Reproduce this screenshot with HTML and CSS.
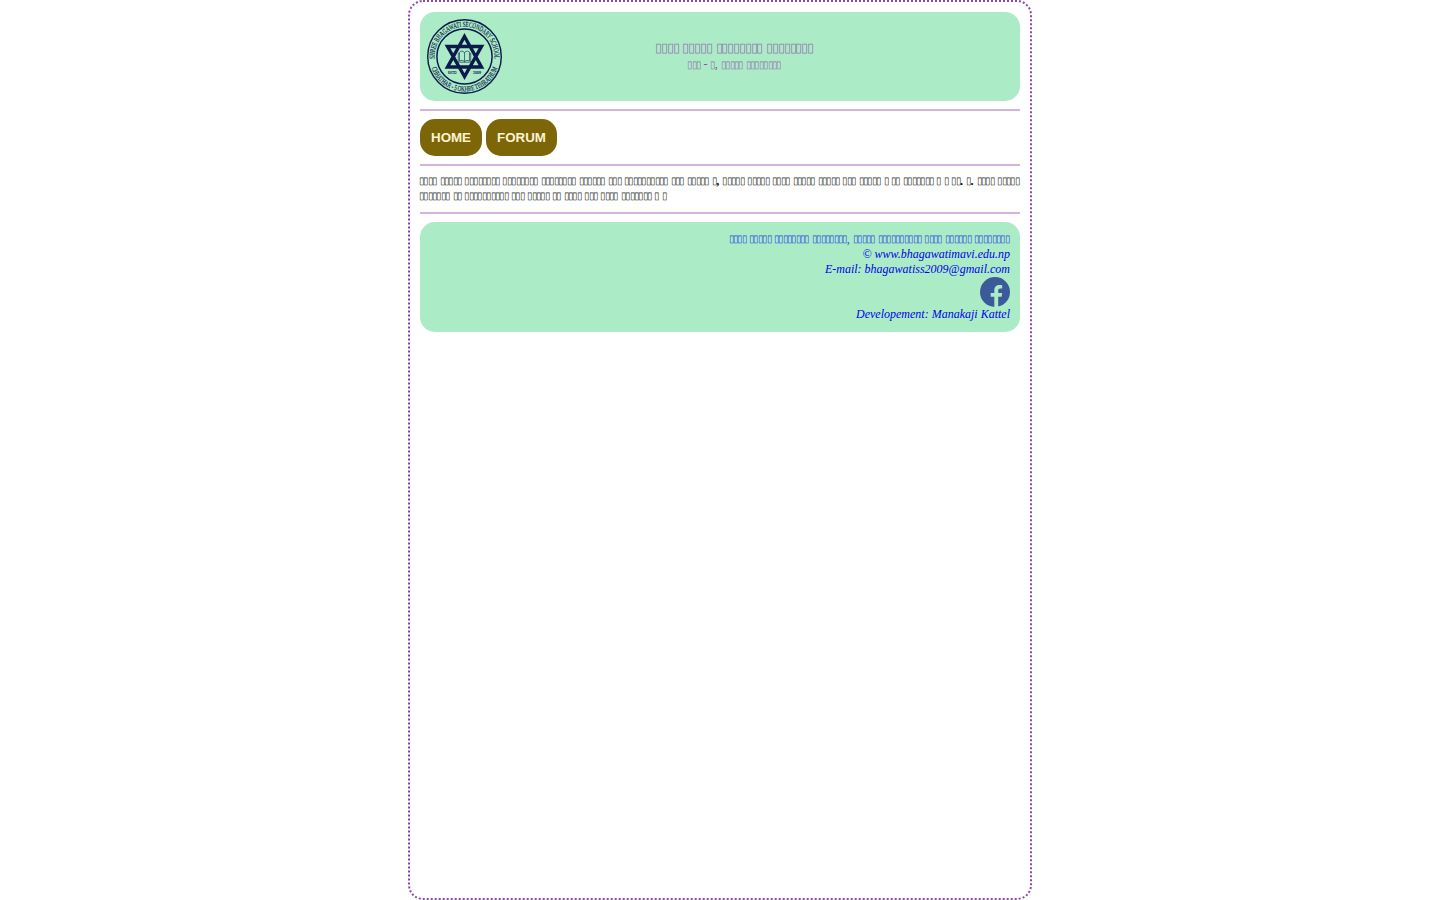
FILE: index.html
```html
<!DOCTYPE html>
<html lang="ne">
<head>
<meta charset="utf-8">
<title>Shree Bhagawati Secondary School</title>
<link rel="stylesheet" href="styles.css">
</head>
<body>
<div class="page">
  <header class="banner">
    <svg class="logo" viewBox="0 0 75 75">
      <defs>
        <path id="arc-top" d="M7.8 42 A30 30 0 1 1 67.2 42"/>
        <path id="arc-bottom" d="M2.6 40 A35 35 0 0 0 72.4 40"/>
      </defs>
      <g fill="none" stroke="#0b1a4a">
        <circle cx="37.5" cy="37.5" r="36.8" stroke-width="1.4"/>
        <circle cx="37.5" cy="37.5" r="27.6" stroke-width="1.5"/>
        <path d="M37.5 17.5 L54.5 48 H20.5 Z M37.5 57.5 L20.5 27.5 H54.5 Z" stroke-width="3.4"/>
        <path d="M37.5 33.5 C35.5 31.6 33 31.8 32.5 33.5 V42 C34.5 41 36.5 41.5 37.5 42.6 C38.5 41.5 40.5 41 42.5 42 V33.5 C42 31.8 39.5 31.6 37.5 33.5 V42.6 M32.3 34.3 H31.3 V43.2 H43.7 V34.3 H42.7" stroke-width=".6"/>
      </g>
      <g class="logo-text">
        <text font-size="7.5" text-anchor="middle"><textPath href="#arc-top" startOffset="50%" textLength="98" lengthAdjust="spacingAndGlyphs">SHREE BHAGAWATI SECONDARY SCHOOL</textPath></text>
        <text font-size="7.5" text-anchor="middle"><textPath href="#arc-bottom" startOffset="50%" textLength="86" lengthAdjust="spacingAndGlyphs">CHHATHAR - 5 OKHRE TEHRATHUM</textPath></text>
        <text x="21" y="55" font-size="5" textLength="8.5" lengthAdjust="spacingAndGlyphs">ESTD</text>
        <text x="46" y="55" font-size="5" textLength="8" lengthAdjust="spacingAndGlyphs">2009</text>
      </g>
    </svg>
    <div class="heading">
      <div class="school">▯▯▯▯ ▯▯▯▯▯ ▯▯▯▯▯▯▯▯ ▯▯▯▯▯▯▯▯</div>
      <div class="address boxes">▯▯▯ <span class="mark">-</span> ▯<span class="mark">,</span> ▯▯▯▯▯ ▯▯▯▯▯▯▯▯</div>
    </div>
  </header>
  <hr class="rule">
  <nav class="menu">
    <button class="menu-button">HOME</button>
    <button class="menu-button">FORUM</button>
  </nav>
  <hr class="rule">
  <div class="intro">
    <div class="boxes full-line">▯▯▯▯ ▯▯▯▯▯ ▯▯▯▯▯▯▯▯ ▯▯▯▯▯▯▯▯ ▯▯▯▯▯▯▯▯ ▯▯▯▯▯▯ ▯▯▯ ▯▯▯▯▯▯▯▯▯▯ ▯▯▯ ▯▯▯▯▯ ▯<span class="mark">,</span> ▯▯▯▯▯ ▯▯▯▯▯ ▯▯▯▯ ▯▯▯▯▯ ▯▯▯▯▯ ▯▯▯ ▯▯▯▯▯ ▯ ▯▯ ▯▯▯▯▯▯▯ ▯ ▯ ▯▯<span class="mark">.</span> ▯<span class="mark">.</span> ▯▯▯▯ ▯▯▯▯▯</div>
    <div class="boxes">▯▯▯▯▯▯▯ ▯▯ ▯▯▯▯▯▯▯▯▯▯ ▯▯▯ ▯▯▯▯▯ ▯▯ ▯▯▯▯ ▯▯▯ ▯▯▯▯ ▯▯▯▯▯▯▯ ▯ ▯</div>
  </div>
  <hr class="rule">
  <footer class="footer">
    <div class="boxes">▯▯▯▯ ▯▯▯▯▯ ▯▯▯▯▯▯▯▯ ▯▯▯▯▯▯▯▯<span class="mark">,</span> ▯▯▯▯▯ ▯▯▯▯▯▯▯▯▯▯ ▯▯▯▯ ▯▯▯▯▯▯ ▯▯▯▯▯▯▯▯</div>
    <div>© www.bhagawatimavi.edu.np</div>
    <div>E-mail: bhagawatiss2009@gmail.com</div>
    <svg class="facebook" viewBox="0 0 30 30">
      <circle cx="15" cy="15" r="15" fill="#3b5a9a"/>
      <path d="M14.3 30 V19.7 H10.7 V16 H14.3 V13.2 C14.3 9.5 16.5 7.9 19.4 7.9 C20.6 7.9 21.7 8 22.2 8.2 V11.4 H20.4 C18.7 11.4 18.2 12.3 18.2 13.5 V16 H22.2 L21.6 19.7 H18.2 V30 Z" fill="#abebc6"/>
    </svg>
    <div>Developement: Manakaji Kattel</div>
  </footer>
</div>
</body>
</html>
```
FILE: styles.css
```css
body {
  margin: 0;
  background: #fff;
  font-family: "Liberation Serif", serif;
  font-size: 12px;
  line-height: 15px;
}
.page {
  box-sizing: border-box;
  width: 624px;
  height: 900px;
  margin: 0 auto;
  padding: 10px;
  border: 2px dotted #8e44ad;
  border-radius: 15px;
}
.banner {
  box-sizing: border-box;
  display: flex;
  height: 89px;
  padding: 7px;
  background: #abebc6;
  border-radius: 15px;
}
.logo {
  flex: none;
  width: 75px;
  height: 75px;
  overflow: visible;
}
.logo-text {
  fill: #0b1a4a;
  stroke: #0b1a4a;
  stroke-width: 0.15px;
  font-family: "Liberation Serif", serif;
}
.heading {
  flex: 1;
  padding-top: 20px;
  margin-left: -54px;
  margin-right: -7px;
  color: #8e44ad;
  text-align: center;
}
.school {
  color: #8e44adb0;
  font-size: 13.3px;
  line-height: 18px;
  letter-spacing: -1.17px;
  word-spacing: 1.84px;
}
/* Glyph boxes are set smaller than the surrounding Latin text. */
.boxes {
  height: 15px;
  margin: -1px 1px 1px -1px;
  font-size: 9.6px;
  font-style: normal;
  letter-spacing: -1.63px;
  word-spacing: 2.23px;
  white-space: nowrap;
}
.address {
  margin: 0;
  color: #8e44adc0;
}
.mark {
  font-size: 12px;
  line-height: 1;
  letter-spacing: 0;
  vertical-align: -1px;
}
.address .mark {
  color: #8e44ad;
  vertical-align: baseline;
}
.rule {
  height: 2px;
  margin: 8px 0;
  border: 0;
  background: #d2b4de;
}
.menu {
  display: flex;
  gap: 4px;
}
.menu-button {
  height: 37px;
  padding: 0 11px;
  border: 0;
  border-radius: 15px;
  background: #7d6608;
  color: #fcf3cf;
  font: bold 13.333px "Liberation Sans", sans-serif;
}
.intro {
  display: flex;
  flex-direction: column;
  height: 30px;
  color: #000000e0;
}
.intro .mark {
  color: #000;
  font-weight: bold;
}
.full-line {
  text-align: justify;
  text-align-last: justify;
}
.footer {
  display: flex;
  flex-direction: column;
  align-items: flex-end;
  padding: 10px;
  background: #abebc6;
  border-radius: 15px;
  color: #00e;
  font-style: italic;
}
.footer .boxes {
  color: #0000eec0;
}
.facebook {
  width: 30px;
  height: 30px;
}
```
